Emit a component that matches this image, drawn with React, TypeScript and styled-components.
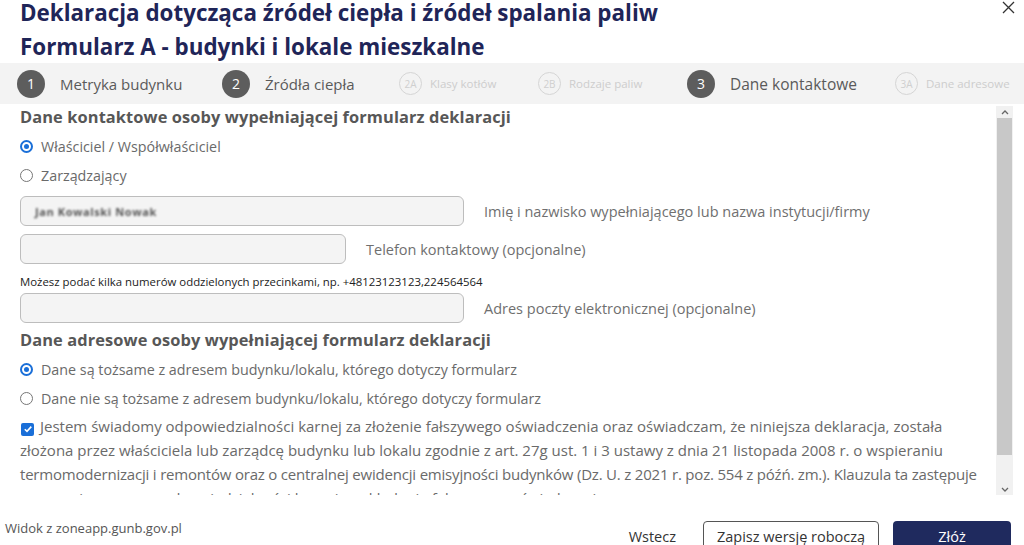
import React from "react";
import styled, { createGlobalStyle } from "styled-components";

const Global = createGlobalStyle`
  html, body { margin: 0; padding: 0; background: #fff; }
  body { width: 1024px; height: 545px; overflow: hidden; font-family: "Open Sans", "Noto Sans", sans-serif; }
  * { box-sizing: border-box; }
  button { font-family: "Open Sans", sans-serif; }
`;

const Page = styled.div`
  width: 1024px;
  height: 545px;
  display: flex;
  flex-direction: column;
  overflow: hidden;
  & > * { flex-shrink: 0; }
`;

const Header = styled.div`
  display: flex;
  justify-content: space-between;
  align-items: flex-start;
  padding: 0 0 0 20px;
  height: 63px;
  overflow: hidden;
`;

const Title = styled.h1`
  margin: -4px 0 0 0;
  font-weight: 700;
  font-size: 22.4px;
  line-height: 34px;
  color: #1f2558;
`;

const CloseBtn = styled.button`
  border: none;
  background: none;
  padding: 0;
  margin: 0 8px 0 0;
  width: 16px;
  height: 14px;
  display: flex;
  align-items: center;
  justify-content: center;
  cursor: pointer;
`;

const Stepper = styled.div`
  height: 41px;
  background: #f3f3f3;
  display: flex;
  align-items: center;
  padding-left: 17px;
  white-space: nowrap;
  overflow: hidden;
`;

const Step = styled.div<{ $w: number }>`
  display: flex;
  align-items: center;
  flex: 0 0 ${(p) => p.$w}px;
`;

const Circle = styled.span<{ $main: boolean }>`
  display: inline-flex;
  align-items: center;
  justify-content: center;
  border-radius: 50%;
  flex: 0 0 auto;
  ${(p) =>
    p.$main
      ? `width: 28px; height: 28px; background: #5d5d5d; color: #fff; font-size: 14px; margin-right: 15px;`
      : `width: 23px; height: 23px; border: 1px solid #d5d5d5; color: #cfcfcf; font-size: 10px; margin-right: 8px; margin-left: 1px;`}
`;

const StepLabel = styled.span<{ $main: boolean; $active?: boolean }>`
  color: ${(p) => (p.$main ? "#5a5a5a" : "#cdcdcd")};
  font-size: ${(p) => (p.$main ? (p.$active ? "15.5px" : "15px") : "11.5px")};
`;

const Body = styled.div`
  height: 389px;
  display: flex;
  overflow: hidden;
  margin-top: 2px;
`;

const Content = styled.div`
  flex: 1;
  overflow: hidden;
  padding: 0 0 0 20px;
  display: flex;
  flex-direction: column;
  & > * { flex-shrink: 0; }
`;

const SectionTitle = styled.h2<{ $mt: number }>`
  margin: ${(p) => p.$mt}px 0 4px 0;
  font-size: 16.4px;
  line-height: 22px;
  font-weight: 700;
  color: #575757;
  letter-spacing: 0.1px;
`;

const OptionRow = styled.label`
  display: flex;
  align-items: center;
  height: 29px;
  font-size: 14.3px;
  color: #6a6a6a;
  gap: 8px;
`;

const Radio = styled.span<{ $on: boolean }>`
  width: 13px;
  height: 13px;
  border-radius: 50%;
  border: ${(p) => (p.$on ? "2px solid #1a6fd8" : "1px solid #767676")};
  display: inline-flex;
  align-items: center;
  justify-content: center;
  flex: 0 0 auto;
  &::after {
    content: "";
    display: ${(p) => (p.$on ? "block" : "none")};
    width: 5px;
    height: 5px;
    border-radius: 50%;
    background: #1a6fd8;
  }
`;

const FieldRow = styled.div<{ $mt: number }>`
  display: flex;
  align-items: center;
  margin-top: ${(p) => p.$mt}px;
  gap: 20px;
`;

const Input = styled.div<{ $w: number }>`
  width: ${(p) => p.$w}px;
  height: 30px;
  border: 1px solid #bdbdbd;
  border-radius: 6px;
  background: #f4f4f4;
  display: flex;
  align-items: center;
  padding-left: 14px;
`;

const Blurred = styled.span`
  font-size: 11px;
  font-weight: 700;
  color: #555;
  filter: blur(0.9px);
  letter-spacing: 0.6px;
`;

const FieldLabel = styled.span`
  font-size: 14.5px;
  color: #6f6f6f;
`;

const Hint = styled.div`
  margin-top: 10px;
  font-size: 11.4px;
  line-height: 16px;
  color: #222;
  height: 16px;
  white-space: nowrap;
`;

const Consent = styled.div`
  margin-top: 1px;
  font-size: 15px;
  line-height: 24px;
  color: #6a6a6a;
  white-space: nowrap;
`;

const ConsentLine = styled.div<{ $ls?: number }>`
  letter-spacing: ${(p) => p.$ls ?? 0}px;
`;

const Check = styled.span`
  display: inline-flex;
  align-items: center;
  justify-content: center;
  width: 13px;
  height: 13px;
  background: #1a6fd8;
  border-radius: 2px;
  vertical-align: -2px;
  margin-right: 6px;
  margin-left: 1px;
`;

const Scrollbar = styled.div`
  flex: 0 0 17px;
  margin-right: 11px;
  display: flex;
  flex-direction: column;
  align-items: stretch;
  background: #f1f1f1;
`;

const ScrollArrow = styled.div`
  height: 12px;
  display: flex;
  align-items: center;
  justify-content: center;
`;

const Thumb = styled.div`
  flex: 0 0 337px;
  background: #c8c8c8;
  margin: 0 1px;
`;

const Spacer = styled.div`
  flex: 1;
`;

const Footer = styled.div`
  height: 50px;
  display: flex;
  align-items: flex-start;
  padding: 0 13px 0 5px;
  overflow: hidden;
`;

const Caption = styled.div`
  font-size: 13px;
  color: #555;
  margin-top: 24px;
  flex: 1;
`;

const Buttons = styled.div`
  display: flex;
  align-items: flex-start;
  margin-top: 26px;
  gap: 14px;
`;

const TextBtn = styled.button`
  border: none;
  background: none;
  font-size: 14.5px;
  color: #333;
  height: 31px;
  padding: 0;
  margin-right: 13px;
`;

const OutlineBtn = styled.button`
  width: 176px;
  height: 31px;
  border: 1px solid #555;
  border-radius: 4px;
  background: #fff;
  font-size: 14.5px;
  color: #333;
  padding: 0;
`;

const PrimaryBtn = styled.button`
  width: 118px;
  height: 31px;
  border: none;
  border-radius: 4px;
  background: #1f2a5e;
  font-size: 14.5px;
  color: #fff;
`;

const steps = [
  { n: "1", label: "Metryka budynku", main: true, w: 205 },
  { n: "2", label: "Źródła ciepła", main: true, w: 176 },
  { n: "2A", label: "Klasy kotłów", main: false, w: 139 },
  { n: "2B", label: "Rodzaje paliw", main: false, w: 150 },
  { n: "3", label: "Dane kontaktowe", main: true, w: 207, active: true },
  { n: "3A", label: "Dane adresowe", main: false, w: 140 },
];

export default function App() {
  return (
    <Page>
      <Global />
      <Header>
        <Title>
          Deklaracja dotycząca źródeł ciepła i źródeł spalania paliw
          <br />
          Formularz A - budynki i lokale mieszkalne
        </Title>
        <CloseBtn aria-label="Zamknij">
          <svg width="13" height="13" viewBox="0 0 13 13">
            <path d="M1 1 L12 12 M12 1 L1 12" stroke="#333" strokeWidth="1.3" />
          </svg>
        </CloseBtn>
      </Header>
      <Stepper>
        {steps.map((s) => (
          <Step key={s.n} $w={s.w}>
            <Circle $main={s.main}>{s.n}</Circle>
            <StepLabel $main={s.main} $active={s.active}>
              {s.label}
            </StepLabel>
          </Step>
        ))}
      </Stepper>
      <Body>
        <Content>
          <SectionTitle $mt={0}>Dane kontaktowe osoby wypełniającej formularz deklaracji</SectionTitle>
          <OptionRow>
            <Radio $on={true} />
            Właściciel / Współwłaściciel
          </OptionRow>
          <OptionRow>
            <Radio $on={false} />
            Zarządzający
          </OptionRow>
          <FieldRow $mt={6}>
            <Input $w={444}>
              <Blurred>Jan Kowalski Nowak</Blurred>
            </Input>
            <FieldLabel>Imię i nazwisko wypełniającego lub nazwa instytucji/firmy</FieldLabel>
          </FieldRow>
          <FieldRow $mt={8}>
            <Input $w={326} />
            <FieldLabel>Telefon kontaktowy (opcjonalne)</FieldLabel>
          </FieldRow>
          <Hint>Możesz podać kilka numerów oddzielonych przecinkami, np. +48123123123,224564564</Hint>
          <FieldRow $mt={3}>
            <Input $w={444} />
            <FieldLabel>Adres poczty elektronicznej (opcjonalne)</FieldLabel>
          </FieldRow>
          <SectionTitle $mt={6}>Dane adresowe osoby wypełniającej formularz deklaracji</SectionTitle>
          <OptionRow>
            <Radio $on={true} />
            Dane są tożsame z adresem budynku/lokalu, którego dotyczy formularz
          </OptionRow>
          <OptionRow>
            <Radio $on={false} />
            Dane nie są tożsame z adresem budynku/lokalu, którego dotyczy formularz
          </OptionRow>
          <Consent>
            <ConsentLine>
              <Check>
                <svg width="10" height="10" viewBox="0 0 10 10">
                  <path d="M1.8 5.2 L4 7.4 L8.3 2.6" stroke="#fff" strokeWidth="1.6" fill="none" />
                </svg>
              </Check>
              Jestem świadomy odpowiedzialności karnej za złożenie fałszywego oświadczenia oraz oświadczam, że niniejsza
              deklaracja, została
            </ConsentLine>
            <ConsentLine>
              złożona przez właściciela lub zarządcę budynku lub lokalu zgodnie z art. 27g ust. 1 i 3 ustawy z dnia 21
              listopada 2008 r. o wspieraniu
            </ConsentLine>
            <ConsentLine $ls={-0.2}>
              termomodernizacji i remontów oraz o centralnej ewidencji emisyjności budynków (Dz. U. z 2021 r. poz. 554 z
              późń. zm.). Klauzula ta zastępuje
            </ConsentLine>
            <ConsentLine>pouczenie organu o odpowiedzialności karnej za składanie fałszywego oświadczenia.</ConsentLine>
          </Consent>
        </Content>
        <Scrollbar>
          <ScrollArrow>
            <svg width="8" height="5" viewBox="0 0 8 5">
              <path d="M1 4 L4 1 L7 4" stroke="#666" strokeWidth="1.3" fill="none" />
            </svg>
          </ScrollArrow>
          <Thumb />
          <Spacer />
          <ScrollArrow>
            <svg width="8" height="5" viewBox="0 0 8 5">
              <path d="M1 1 L4 4 L7 1" stroke="#666" strokeWidth="1.3" fill="none" />
            </svg>
          </ScrollArrow>
        </Scrollbar>
      </Body>
      <Footer>
        <Caption>Widok z zoneapp.gunb.gov.pl</Caption>
        <Buttons>
          <TextBtn>Wstecz</TextBtn>
          <OutlineBtn>Zapisz wersję roboczą</OutlineBtn>
          <PrimaryBtn>Złóż</PrimaryBtn>
        </Buttons>
      </Footer>
    </Page>
  );
}
